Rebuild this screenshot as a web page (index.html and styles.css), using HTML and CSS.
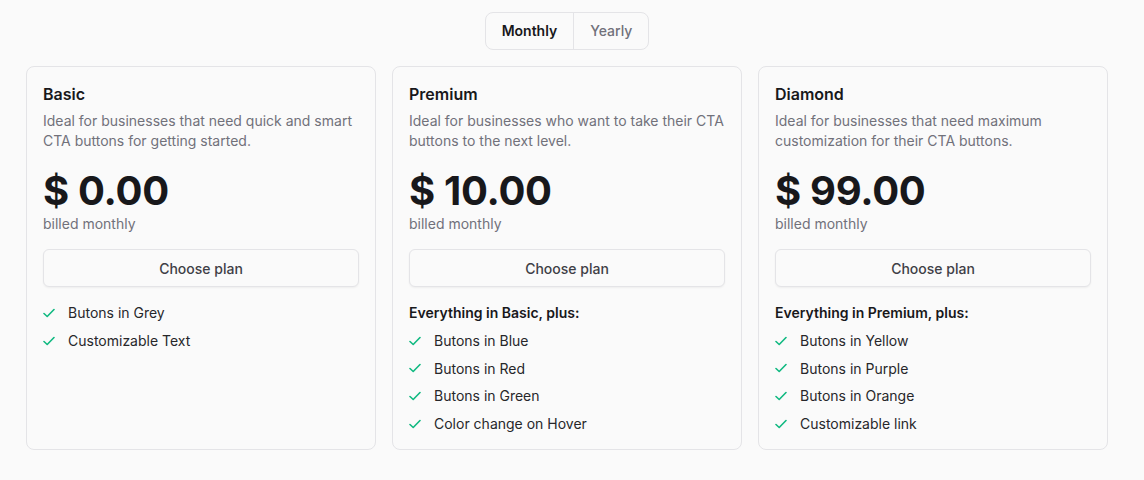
FILE: index.html
```html
<!DOCTYPE html>
<html lang="en">
<head>
    <meta charset="UTF-8">
    <title>Pricing</title>
    <link rel="stylesheet" href="styles.css">
</head>
<body>

<div class="toggle">
    <button class="toggle-btn active">Monthly</button>
    <button class="toggle-btn">Yearly</button>
</div>

<div class="plans">
    <div class="card">
        <h2>Basic</h2>
        <p class="desc">Ideal for businesses that need quick and smart CTA buttons for getting started.</p>
        <div class="price">$ 0.00</div>
        <p class="billed">billed monthly</p>
        <button class="choose">Choose plan</button>
        <ul class="features">
            <li><svg viewBox="0 0 12 10"><path d="M1 5.5l3.2 3L11 1.5"/></svg>Butons in Grey</li>
            <li><svg viewBox="0 0 12 10"><path d="M1 5.5l3.2 3L11 1.5"/></svg>Customizable Text</li>
        </ul>
    </div>

    <div class="card">
        <h2>Premium</h2>
        <p class="desc">Ideal for businesses who want to take their CTA buttons to the next level.</p>
        <div class="price">$ 10.00</div>
        <p class="billed">billed monthly</p>
        <button class="choose">Choose plan</button>
        <ul class="features">
            <li class="plus">Everything in Basic, plus:</li>
            <li><svg viewBox="0 0 12 10"><path d="M1 5.5l3.2 3L11 1.5"/></svg>Butons in Blue</li>
            <li><svg viewBox="0 0 12 10"><path d="M1 5.5l3.2 3L11 1.5"/></svg>Butons in Red</li>
            <li><svg viewBox="0 0 12 10"><path d="M1 5.5l3.2 3L11 1.5"/></svg>Butons in Green</li>
            <li><svg viewBox="0 0 12 10"><path d="M1 5.5l3.2 3L11 1.5"/></svg>Color change on Hover</li>
        </ul>
    </div>

    <div class="card">
        <h2>Diamond</h2>
        <p class="desc">Ideal for businesses that need maximum customization for their CTA buttons.</p>
        <div class="price">$ 99.00</div>
        <p class="billed">billed monthly</p>
        <button class="choose">Choose plan</button>
        <ul class="features">
            <li class="plus">Everything in Premium, plus:</li>
            <li><svg viewBox="0 0 12 10"><path d="M1 5.5l3.2 3L11 1.5"/></svg>Butons in Yellow</li>
            <li><svg viewBox="0 0 12 10"><path d="M1 5.5l3.2 3L11 1.5"/></svg>Butons in Purple</li>
            <li><svg viewBox="0 0 12 10"><path d="M1 5.5l3.2 3L11 1.5"/></svg>Butons in Orange</li>
            <li><svg viewBox="0 0 12 10"><path d="M1 5.5l3.2 3L11 1.5"/></svg>Customizable link</li>
        </ul>
    </div>
</div>

</body>
</html>
```

FILE: styles.css
```css
body {
    margin: 0;
    padding: 12px 36px 0 26px;
    font-family: Inter, "Noto Sans", sans-serif;
    background-color: #FAFAFA;
    color: #18181B;
    display: flex;
    flex-direction: column;
    align-items: center;
}

.toggle {
    display: flex;
    border: 1px solid #E4E4E7;
    border-radius: 8px;
    overflow: hidden;
    background-color: #FAFAFA;
}

.toggle-btn {
    font-family: inherit;
    font-size: 14px;
    font-weight: 500;
    height: 36px;
    padding: 0 16px 2px;
    border: none;
    background: none;
    color: #71717A;
}

.toggle-btn.active {
    color: #18181B;
    font-weight: 600;
    border-right: 1px solid #E4E4E7;
}

.plans {
    display: flex;
    gap: 16px;
    margin-top: 16px;
}

.card {
    width: 350px;
    box-sizing: border-box;
    border: 1px solid #E4E4E7;
    border-radius: 8px;
    padding: 17px 16px 16px;
    height: 384px;
}

h2 {
    margin: 0;
    font-size: 16px;
    font-weight: 600;
    line-height: 20px;
}

.desc {
    margin: 7px 0 0;
    font-size: 14px;
    line-height: 20px;
    color: #71717A;
}

.price {
    margin-top: 16px;
    font-size: 40px;
    font-weight: 700;
    line-height: 48px;
    letter-spacing: -0.3px;
}

.billed {
    margin: -1px 0 0;
    font-size: 14px;
    line-height: 20px;
    color: #71717A;
}

.choose {
    display: block;
    width: 100%;
    height: 38px;
    margin-top: 15px;
    font-family: inherit;
    font-size: 14px;
    font-weight: 500;
    color: #3F3F46;
    background-color: #FAFAFA;
    border: 1px solid #E4E4E7;
    border-radius: 6px;
    box-shadow: 0 1px 2px rgba(0, 0, 0, 0.05);
}

.features {
    list-style: none;
    margin: 12px 0 0;
    padding: 0;
}

.features li {
    display: flex;
    align-items: center;
    height: 27.7px;
    font-size: 14px;
    color: #27272A;
}

.features li.plus {
    font-weight: 600;
    color: #18181B;
}

.features svg {
    width: 12px;
    height: 10px;
    margin-right: 13px;
    fill: none;
    stroke: #10B981;
    stroke-width: 1.6;
    stroke-linecap: round;
    stroke-linejoin: round;
}
```
